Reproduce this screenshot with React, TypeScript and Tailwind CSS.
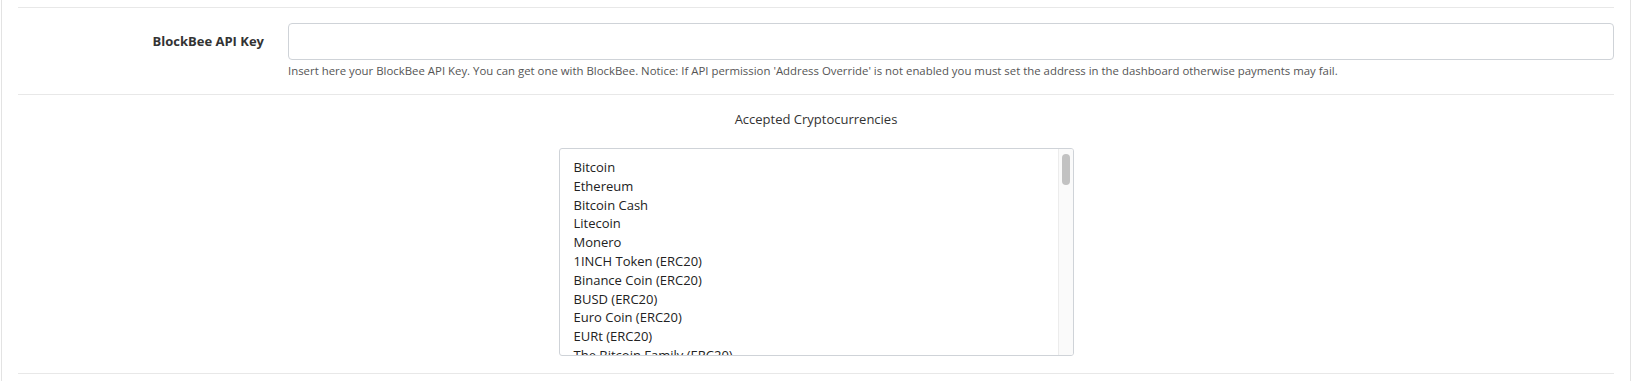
import React from "react";

const coins = [
  "Bitcoin",
  "Ethereum",
  "Bitcoin Cash",
  "Litecoin",
  "Monero",
  "1INCH Token (ERC20)",
  "Binance Coin (ERC20)",
  "BUSD (ERC20)",
  "Euro Coin (ERC20)",
  "EURt (ERC20)",
  "The Bitcoin Family (ERC20)",
  "Chainlink (ERC20)",
];

export default function App() {
  return (
    <div
      className="w-[1633px] h-[381px] bg-white overflow-hidden text-[#333]"
      style={{ fontFamily: '"Open Sans", "Liberation Sans", sans-serif' }}
    >
      <div className="ml-[1px] w-[1630px] h-full border-l border-r border-[#e3e3e3] px-[16px]">
        <div className="h-[7px]" />
        {/* Row 1 */}
        <div className="border-t border-[#e8e8e8] pt-[15px] pb-[16px]">
          <div className="flex items-center">
            <div className="w-[246px] text-right text-[13px] font-bold text-[#333]">
              BlockBee API Key
            </div>
            <div className="ml-[24px] flex-1 h-[37px] rounded-[4px] border border-[#cfd3d8] bg-white" />
          </div>
          <div className="ml-[270px] mt-[3px] text-[11.4px] leading-[15px] text-[#555]">
            Insert here your BlockBee API Key. You can get one with BlockBee. Notice: If API permission 'Address
            Override' is not enabled you must set the address in the dashboard otherwise payments may fail.
          </div>
        </div>
        {/* Row 2 */}
        <div className="border-t border-[#e8e8e8] pt-[15px] pb-[17px]">
          <div className="text-center text-[13px] leading-[18px] text-[#333]">Accepted Cryptocurrencies</div>
          <div className="mt-[20px] mx-auto w-[515px] h-[208px] rounded-[3px] border border-[#cfd3d8] flex overflow-hidden">
            <div className="flex-1 pl-[14px] pt-[9px] overflow-hidden">
              {coins.map((c) => (
                <div key={c} className="text-[13px] leading-[18.8px] text-[#222] whitespace-nowrap">
                  {c}
                </div>
              ))}
            </div>
            <div className="w-[15px] border-l border-[#ececec] bg-[#fafafa] pt-[5px] flex justify-center">
              <div className="w-[8px] h-[31px] rounded-full bg-[#c2c2c2]" />
            </div>
          </div>
        </div>
        <div className="border-t border-[#e8e8e8]" />
      </div>
    </div>
  );
}
